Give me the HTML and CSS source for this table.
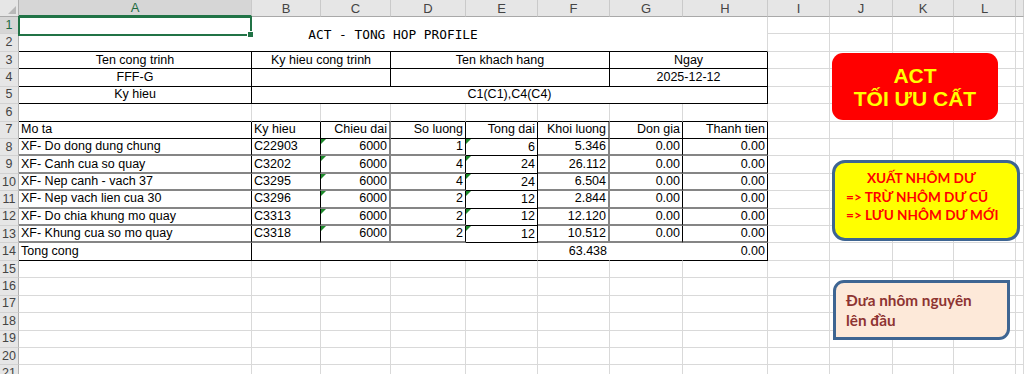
FILE: index.html
```html
<!DOCTYPE html>
<html lang="vi">
<head>
<meta charset="utf-8">
<title>ACT - TONG HOP PROFILE</title>
<link rel="stylesheet" href="styles.css">
</head>
<body>
<div class="sheet">
  <table class="grid">
    <colgroup>
      <col class="w-rh"><col class="w-a"><col class="w-b"><col class="w-c"><col class="w-d"><col class="w-e"><col class="w-f"><col class="w-g"><col class="w-h"><col class="w-i"><col class="w-j"><col class="w-k"><col class="w-l"><col class="w-m">
    </colgroup>
    <thead>
      <tr>
        <th class="corner"></th><th class="sel">A</th><th>B</th><th>C</th><th>D</th><th>E</th><th>F</th><th>G</th><th>H</th><th>I</th><th>J</th><th>K</th><th>L</th><th></th>
      </tr>
    </thead>
    <tbody>
      <tr><th class="rh rsel">1</th><td colspan="8" rowspan="2" class="title">ACT - TONG HOP PROFILE</td><td></td><td></td><td></td><td></td><td></td></tr>
      <tr><th class="rh">2</th><td></td><td></td><td></td><td></td><td></td></tr>
      <tr><th class="rh">3</th><td class="bk c">Ten cong trinh</td><td colspan="2" class="bk c">Ky hieu cong trinh</td><td colspan="3" class="bk c">Ten khach hang</td><td colspan="2" class="bk c">Ngay</td><td></td><td></td><td></td><td></td><td></td></tr>
      <tr><th class="rh">4</th><td class="bk c">FFF-G</td><td colspan="2" class="bk"></td><td colspan="3" class="bk"></td><td colspan="2" class="bk c">2025-12-12</td><td></td><td></td><td></td><td></td><td></td></tr>
      <tr><th class="rh">5</th><td class="bk c">Ky hieu</td><td colspan="7" class="bk c">C1(C1),C4(C4)</td><td></td><td></td><td></td><td></td><td></td></tr>
      <tr><th class="rh">6</th><td class="bb"></td><td class="bb"></td><td class="bb"></td><td class="bb"></td><td class="bb"></td><td class="bb"></td><td class="bb"></td><td class="bb bkr"></td><td></td><td></td><td></td><td></td><td></td></tr>
      <tr><th class="rh">7</th><td class="bk">Mo ta</td><td class="bk">Ky hieu</td><td class="bk r gr">Chieu dai</td><td class="bk r">So luong</td><td class="bk r">Tong dai</td><td class="bk r gr">Khoi luong</td><td class="bk r">Don gia</td><td class="bk r">Thanh tien</td><td></td><td></td><td></td><td></td><td></td></tr>
      <tr><th class="rh">8</th><td class="bk gb">XF- Do dong dung chung</td><td class="bk gb">C22903</td><td class="bk r gb gr t">6000</td><td class="bk r gb">1</td><td class="bk r t">6</td><td class="bk r gb gr">5.346</td><td class="bk r gb">0.00</td><td class="bk r gb">0.00</td><td></td><td></td><td></td><td></td><td></td></tr>
      <tr><th class="rh">9</th><td class="bk gb">XF- Canh cua so quay</td><td class="bk gb">C3202</td><td class="bk r gb gr t">6000</td><td class="bk r gb">4</td><td class="bk r t">24</td><td class="bk r gb gr">26.112</td><td class="bk r gb">0.00</td><td class="bk r gb">0.00</td><td></td><td></td><td></td><td></td><td></td></tr>
      <tr><th class="rh">10</th><td class="bk gb">XF- Nep canh - vach 37</td><td class="bk gb">C3295</td><td class="bk r gb gr t">6000</td><td class="bk r gb">4</td><td class="bk r t">24</td><td class="bk r gb gr">6.504</td><td class="bk r gb">0.00</td><td class="bk r gb">0.00</td><td></td><td></td><td></td><td></td><td></td></tr>
      <tr><th class="rh">11</th><td class="bk gb">XF- Nep vach lien cua 30</td><td class="bk gb">C3296</td><td class="bk r gb gr t">6000</td><td class="bk r gb">2</td><td class="bk r t">12</td><td class="bk r gb gr">2.844</td><td class="bk r gb">0.00</td><td class="bk r gb">0.00</td><td></td><td></td><td></td><td></td><td></td></tr>
      <tr><th class="rh">12</th><td class="bk gb">XF- Do chia khung mo quay</td><td class="bk gb">C3313</td><td class="bk r gb gr t">6000</td><td class="bk r gb">2</td><td class="bk r t">12</td><td class="bk r gb gr">12.120</td><td class="bk r gb">0.00</td><td class="bk r gb">0.00</td><td></td><td></td><td></td><td></td><td></td></tr>
      <tr><th class="rh">13</th><td class="bk gb">XF- Khung cua so mo quay</td><td class="bk gb">C3318</td><td class="bk r gb gr t">6000</td><td class="bk r gb">2</td><td class="bk r t">12</td><td class="bk r gb gr">10.512</td><td class="bk r gb">0.00</td><td class="bk r gb">0.00</td><td></td><td></td><td></td><td></td><td></td></tr>
      <tr><th class="rh">14</th><td class="bk">Tong cong</td><td colspan="4" class="bb"></td><td class="bb nr r">63.438</td><td class="bb nr"></td><td class="bk r">0.00</td><td></td><td></td><td></td><td></td><td></td></tr>
      <tr><th class="rh">15</th><td></td><td></td><td></td><td></td><td></td><td></td><td></td><td></td><td></td><td></td><td></td><td></td><td></td></tr>
      <tr><th class="rh">16</th><td></td><td></td><td></td><td></td><td></td><td></td><td></td><td></td><td></td><td></td><td></td><td></td><td></td></tr>
      <tr><th class="rh">17</th><td></td><td></td><td></td><td></td><td></td><td></td><td></td><td></td><td></td><td></td><td></td><td></td><td></td></tr>
      <tr><th class="rh">18</th><td></td><td></td><td></td><td></td><td></td><td></td><td></td><td></td><td></td><td></td><td></td><td></td><td></td></tr>
      <tr><th class="rh">19</th><td></td><td></td><td></td><td></td><td></td><td></td><td></td><td></td><td></td><td></td><td></td><td></td><td></td></tr>
      <tr><th class="rh">20</th><td></td><td></td><td></td><td></td><td></td><td></td><td></td><td></td><td></td><td></td><td></td><td></td><td></td></tr>
      <tr class="last"><th class="rh">21</th><td></td><td></td><td></td><td></td><td></td><td></td><td></td><td></td><td></td><td></td><td></td><td></td><td></td></tr>
    </tbody>
  </table>

  <div class="selection"><span class="handle"></span></div>

  <div class="shape shape-red">
    <span>ACT</span>
    <span>TỐI ƯU CẤT</span>
  </div>

  <div class="shape shape-yellow">
    <div class="first">XUẤT NHÔM DƯ</div>
    <div>=&gt; TRỪ NHÔM DƯ CŨ</div>
    <div>=&gt; LƯU NHÔM DƯ MỚI</div>
  </div>

  <div class="shape shape-peach">
    <div>Đưa nhôm nguyên</div>
    <div>lên đầu</div>
  </div>
</div>
</body>
</html>
```
FILE: styles.css
```css
html, body {
  margin: 0;
  padding: 0;
  background: #ffffff;
}
body {
  width: 1024px;
  height: 374px;
  overflow: hidden;
  font-family: "Liberation Sans", Arial, sans-serif;
}
.sheet {
  position: relative;
  width: 1024px;
  height: 374px;
  overflow: hidden;
}

/* ---------- grid ---------- */
.grid {
  border-collapse: separate;
  border-spacing: 0;
  table-layout: fixed;
  width: 1024px;
  font-size: 12.5px;
  color: #000;
}
.w-rh { width: 19px; }
.w-a { width: 233px; }
.w-b { width: 69px; }
.w-c { width: 70px; }
.w-d { width: 75px; }
.w-e { width: 72px; }
.w-f { width: 72px; }
.w-g { width: 73px; }
.w-h { width: 85px; }
.w-i { width: 62px; }
.w-j { width: 63px; }
.w-k { width: 61px; }
.w-l { width: 62px; }
.w-m { width: 8px; }

.grid thead tr { height: 17px; }
.grid thead th {
  padding: 0;
  background: #e6e6e6;
  border-right: 1px solid #cacaca;
  border-bottom: 1px solid #a9a9a9;
  font-weight: normal;
  font-size: 13px;
  line-height: 15px;
  color: #444;
  text-align: center;
  overflow: hidden;
}
.grid thead th.sel {
  background: #d6d6d6;
  color: #1d6b3f;
  border-bottom: 2px solid #217346;
}
.grid thead th.corner {
  position: relative;
  border-right: 1px solid #b0b0b0;
}
.grid thead th.corner::after {
  content: "";
  position: absolute;
  right: 2px;
  bottom: 2px;
  border-left: 8px solid transparent;
  border-bottom: 8px solid #b8b8b8;
}

.grid tbody tr { height: 17.43px; }
.grid th.rh {
  padding: 0;
  background: #e6e6e6;
  border-right: 1px solid #b0b0b0;
  border-bottom: 1px solid #d2d2d2;
  font-weight: normal;
  font-size: 12.5px;
  line-height: 15px;
  color: #444;
  text-align: center;
}
.grid th.rsel {
  background: #d6d6d6;
  color: #1d6b3f;
}
.grid td {
  padding: 0 2px;
  border-right: 1px solid #d9d9d9;
  border-bottom: 1px solid #d9d9d9;
  white-space: nowrap;
  overflow: hidden;
  line-height: 15px;
  vertical-align: middle;
}
.grid td.title {
  font-family: "DejaVu Sans Mono", "Liberation Mono", monospace;
  font-size: 12.8px;
  text-align: center;
  border-bottom: 1px solid #000;
  padding-top: 2px;
}
.grid td.bk {
  border-right: 1px solid #000;
  border-bottom: 1px solid #000;
}
.grid td.bb { border-bottom: 1px solid #000; }
.grid td.bkr { border-right: 1px solid #d9d9d9; }
.grid td.nr { border-right: 1px solid #fff; }
.grid td.gb { border-bottom: 2px solid #858585; }
.grid td.gr { border-right: 2px solid #858585; }
.grid td.c { text-align: center; }
.grid td.r { text-align: right; }
.grid td.t { position: relative; }
.grid td.t::before {
  content: "";
  position: absolute;
  left: 0;
  top: 0;
  border-top: 5px solid #1e8a2c;
  border-right: 5px solid transparent;
}

/* ---------- selection ---------- */
.selection {
  position: absolute;
  left: 18px;
  top: 16px;
  width: 234px;
  height: 20px;
  box-sizing: border-box;
  border: 2px solid #217346;
  pointer-events: none;
}
.selection .handle {
  position: absolute;
  right: -4px;
  bottom: -4px;
  width: 5px;
  height: 5px;
  background: #217346;
  border: 1px solid #fff;
}

/* ---------- shapes ---------- */
.shape {
  position: absolute;
  box-sizing: border-box;
}
.shape-red {
  left: 832px;
  top: 53px;
  width: 166px;
  height: 67px;
  background: #ff0000;
  border-radius: 11px;
  display: flex;
  flex-direction: column;
  align-items: center;
  justify-content: center;
  color: #ffff00;
  font-family: "Liberation Sans", Arial, sans-serif;
  font-weight: bold;
  font-size: 21px;
  line-height: 23px;
}
.shape-yellow {
  left: 832px;
  top: 160px;
  width: 188px;
  height: 81px;
  background: #ffff00;
  border: 3px solid #3e6592;
  border-radius: 13px;
  padding: 6px 0 0 11px;
  color: #ff0000;
  font-family: Lato, "Open Sans", sans-serif;
  font-weight: 700;
  font-size: 13.6px;
  line-height: 18.5px;
  white-space: nowrap;
}
.shape-yellow .first { padding-left: 21px; }
.shape-peach {
  left: 833px;
  top: 280px;
  width: 177px;
  height: 60px;
  background: #fde9d9;
  border: 3px solid #3e6592;
  border-radius: 11px 0 11px 0;
  padding: 7px 0 0 10px;
  color: #8e3432;
  font-family: Lato, "Open Sans", sans-serif;
  font-weight: 700;
  font-size: 15.3px;
  line-height: 20px;
  white-space: nowrap;
}
```
